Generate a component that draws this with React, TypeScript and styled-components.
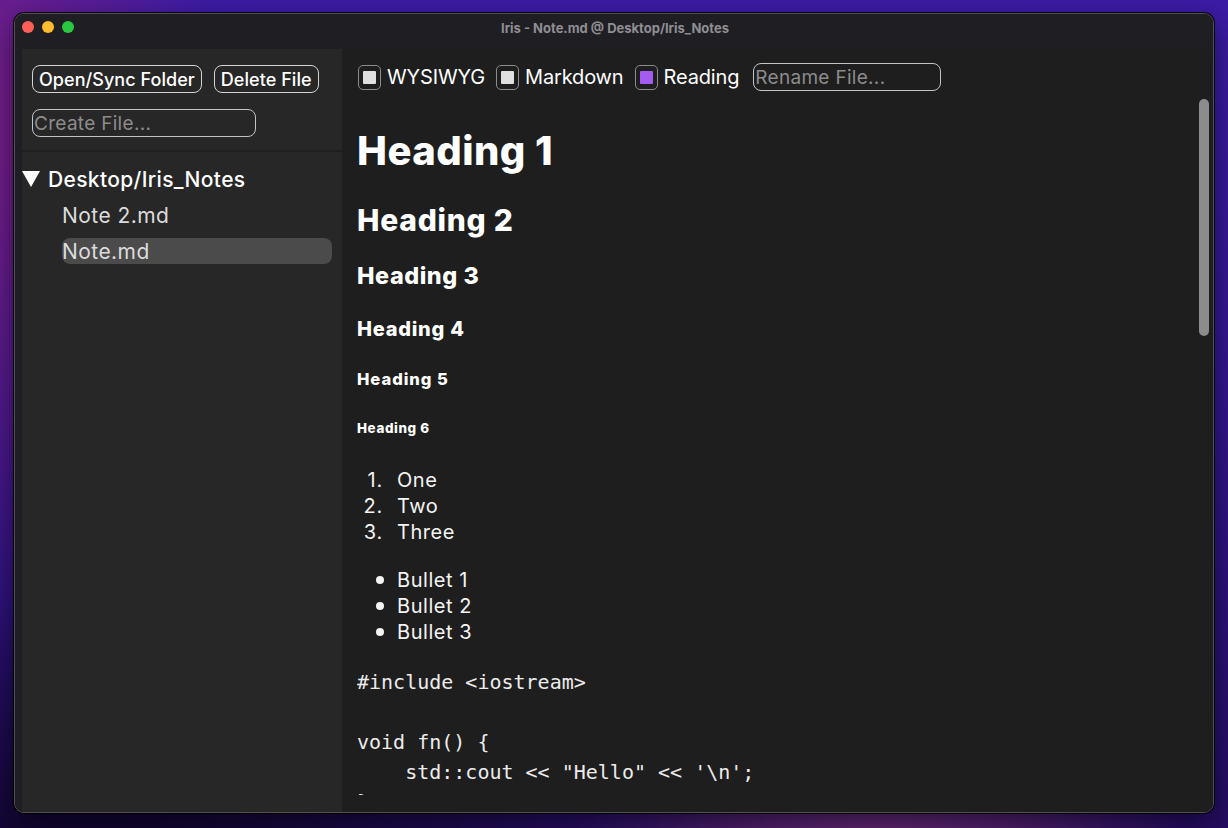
import React from "react";
import styled, { createGlobalStyle } from "styled-components";

const Global = createGlobalStyle`
  html, body { margin: 0; padding: 0; }
  body {
    width: 1228px;
    height: 828px;
    overflow: hidden;
    font-family: Inter, "Noto Sans", "Liberation Sans", sans-serif;
  }
  * { box-sizing: border-box; }
`;

const Desktop = styled.div`
  width: 1228px;
  height: 828px;
  padding: 13px 14px 15px 14px;
  background:
    radial-gradient(ellipse 320px 120px at 880px 860px, rgba(150, 60, 130, 0.75), rgba(150, 60, 130, 0) 100%),
    radial-gradient(ellipse 260px 500px at -40px 120px, rgba(130, 30, 130, 0.9), rgba(130, 30, 130, 0) 100%),
    radial-gradient(ellipse 500px 300px at 100px 900px, rgba(10, 3, 30, 0.95), rgba(10, 3, 30, 0) 100%),
    linear-gradient(180deg, #3b1ca6 0%, #32168f 50%, #240d62 100%);
`;

const Window = styled.div`
  width: 1200px;
  height: 800px;
  border-radius: 10px;
  border: 1px solid #505050;
  box-shadow: 0 0 0 1px rgba(0, 0, 0, 0.85), 0 10px 30px rgba(0, 0, 0, 0.5);
  background: #1e1e1f;
  display: flex;
  flex-direction: column;
  overflow: hidden;
`;

const TitleBar = styled.div`
  height: 27px;
  flex: none;
  position: relative;
  display: flex;
  align-items: center;
  justify-content: center;
  background: #1f1e22;
`;

const Lights = styled.div`
  position: absolute;
  left: 7px;
  top: 7px;
  display: flex;
  gap: 8px;
`;

const Light = styled.span<{ $c: string }>`
  width: 12px;
  height: 12px;
  border-radius: 50%;
  background: ${(p) => p.$c};
`;

const Title = styled.div`
  font-family: Inter, "Liberation Sans", sans-serif;
  font-size: 13px;
  font-weight: 700;
  color: #8f8e93;
  margin-left: 2px;
`;

const Body = styled.div`
  flex: 1;
  min-height: 0;
  display: flex;
  padding: 8px 0 0 7px;
  background: #1f1e22;
`;

const Sidebar = styled.aside`
  width: 320px;
  flex: none;
  background: #272727;
  display: flex;
  flex-direction: column;
`;

const SideTop = styled.div`
  padding: 16px 10px 13px 10px;
  display: flex;
  flex-direction: column;
  gap: 16px;
  border-bottom: 2px solid #1f1f1f;
`;

const ButtonRow = styled.div`
  display: flex;
  gap: 12px;
`;

const Button = styled.button`
  height: 28px;
  padding: 0 6px;
  border: 1px solid #d4d4d4;
  border-radius: 8px;
  background: transparent;
  color: #ffffff;
  font-family: Inter, "Liberation Sans", sans-serif;
  font-size: 18px;
  font-weight: 500;
  letter-spacing: 0.05px;
  cursor: pointer;
`;

const TextInput = styled.input<{ $w: number }>`
  width: ${(p) => p.$w}px;
  height: 28px;
  padding: 0 1px;
  border: 1px solid #c4c4c4;
  border-radius: 8px;
  background: transparent;
  color: #ffffff;
  font-family: Inter, "Liberation Sans", sans-serif;
  font-size: 19px;
  letter-spacing: 0.3px;
  outline: none;
  &::placeholder {
    color: #8c8c8c;
  }
`;

const Tree = styled.div`
  padding-top: 14px;
  display: flex;
  flex-direction: column;
  gap: 10px;
`;

const TreeHeader = styled.div`
  height: 26px;
  display: flex;
  align-items: center;
  gap: 8px;
  color: #ffffff;
  font-size: 21px;
  font-weight: 500;
  letter-spacing: 0.35px;
`;

const TreeItem = styled.div<{ $selected?: boolean }>`
  height: 26px;
  margin: 0 10px 0 40px;
  display: flex;
  align-items: center;
  border-radius: 8px;
  background: ${(p) => (p.$selected ? "#4b4b4b" : "transparent")};
  color: #dcdcdc;
  font-size: 21px;
  font-weight: 400;
  letter-spacing: 0.45px;
`;

const Main = styled.main`
  flex: 1;
  min-width: 0;
  position: relative;
  display: flex;
  flex-direction: column;
  padding: 14px 15px 17px 15px;
  background: #1e1e1e;
`;

const Toolbar = styled.div`
  height: 28px;
  flex: none;
  display: flex;
  align-items: center;
  padding-left: 1px;
`;

const Choice = styled.label`
  display: flex;
  align-items: center;
  gap: 6px;
  margin-right: 11px;
  color: #ffffff;
  font-size: 20px;
  font-weight: 400;
  letter-spacing: -0.15px;
`;

const Box = styled.span`
  width: 23px;
  height: 25px;
  border: 1px solid #8c8c8c;
  border-radius: 5px;
  display: flex;
  align-items: center;
  justify-content: center;
`;

const Mark = styled.span<{ $on?: boolean }>`
  width: 13px;
  height: 13px;
  border-radius: 1px;
  background: ${(p) => (p.$on ? "#a45cf0" : "#e0e0e0")};
`;

const RenameSlot = styled.div`
  margin-left: 3px;
  display: flex;
`;

const Scroll = styled.div`
  flex: 1;
  min-height: 0;
  overflow: hidden;
  margin-top: 9px;
  color: #ffffff;
  font-size: 20px;
`;

const H1 = styled.h1`
  font-size: 40px;
  font-weight: 800;
  margin: 26.8px 0;
  line-height: 48px;
  letter-spacing: 0.45px;
`;
const H2 = styled.h2`
  font-size: 30px;
  font-weight: 800;
  margin: 24.9px 0;
  line-height: 36px;
  letter-spacing: 0.75px;
`;
const H3 = styled.h3`
  font-size: 23.4px;
  font-weight: 800;
  margin: 23.4px 0;
  line-height: 28px;
  letter-spacing: 0.55px;
`;
const H4 = styled.h4`
  font-size: 20px;
  font-weight: 800;
  margin: 26.6px 0;
  line-height: 24px;
  letter-spacing: 0.75px;
`;
const H5 = styled.h5`
  font-size: 16.6px;
  font-weight: 800;
  margin: 27.7px 0;
  line-height: 20px;
  letter-spacing: 0.95px;
`;
const H6 = styled.h6`
  font-size: 13.4px;
  font-weight: 800;
  margin: 31.2px 0;
  line-height: 16px;
  letter-spacing: 0.6px;
`;

const List = styled.div<{ $mb: number }>`
  margin: 20px 0 ${(p) => p.$mb}px 0;
  display: flex;
  flex-direction: column;
  line-height: 26px;
  color: #f4f4f4;
  letter-spacing: 0.55px;
`;

const Item = styled.div`
  display: flex;
  align-items: center;
`;

const Num = styled.span`
  width: 40px;
  flex: none;
  padding-right: 14px;
  text-align: right;
  letter-spacing: 0.8px;
`;

const Disc = styled.span`
  width: 40px;
  flex: none;
  display: flex;
  justify-content: flex-end;
  padding-right: 13px;
  &::before {
    content: "";
    width: 8px;
    height: 8px;
    border-radius: 50%;
    background: #f4f4f4;
  }
`;

const Code = styled.pre`
  margin: 22px 0;
  font-family: "DejaVu Sans Mono", "Liberation Mono", monospace;
  font-size: 20px;
  line-height: 30px;
  color: #ececec;
`;

const Thumb = styled.div`
  position: absolute;
  right: 4px;
  top: 50px;
  width: 10px;
  height: 237px;
  border-radius: 5px;
  background: #8c8c8c;
`;

const code = `#include <iostream>

void fn() {
    std::cout << "Hello" << '\\n';
}

int main() {
    fn();
    return 0;
}`;

const ordered = ["One", "Two", "Three"];
const bullets = ["Bullet 1", "Bullet 2", "Bullet 3"];

export default function App() {
  return (
    <>
      <Global />
      <Desktop>
        <Window>
          <TitleBar>
            <Lights>
              <Light $c="#fe5f57" />
              <Light $c="#febc2e" />
              <Light $c="#28c840" />
            </Lights>
            <Title>Iris - Note.md @ Desktop/Iris_Notes</Title>
          </TitleBar>
          <Body>
            <Sidebar>
              <SideTop>
                <ButtonRow>
                  <Button>Open/Sync Folder</Button>
                  <Button>Delete File</Button>
                </ButtonRow>
                <TextInput $w={224} placeholder="Create File..." />
              </SideTop>
              <Tree>
                <TreeHeader>
                  <svg width="18" height="16" viewBox="0 0 18 16">
                    <polygon points="0,0 18,0 9,16" fill="#ffffff" />
                  </svg>
                  Desktop/Iris_Notes
                </TreeHeader>
                <TreeItem>Note 2.md</TreeItem>
                <TreeItem $selected>Note.md</TreeItem>
              </Tree>
            </Sidebar>
            <Main>
              <Toolbar>
                <Choice>
                  <Box>
                    <Mark />
                  </Box>
                  WYSIWYG
                </Choice>
                <Choice>
                  <Box>
                    <Mark />
                  </Box>
                  Markdown
                </Choice>
                <Choice>
                  <Box>
                    <Mark $on />
                  </Box>
                  Reading
                </Choice>
                <RenameSlot>
                  <TextInput $w={188} placeholder="Rename File..." />
                </RenameSlot>
              </Toolbar>
              <Scroll>
                <H1>Heading 1</H1>
                <H2>Heading 2</H2>
                <H3>Heading 3</H3>
                <H4>Heading 4</H4>
                <H5>Heading 5</H5>
                <H6>Heading 6</H6>
                <List $mb={22}>
                  {ordered.map((t, i) => (
                    <Item key={t}>
                      <Num>{i + 1}.</Num>
                      {t}
                    </Item>
                  ))}
                </List>
                <List $mb={20}>
                  {bullets.map((t) => (
                    <Item key={t}>
                      <Disc />
                      {t}
                    </Item>
                  ))}
                </List>
                <Code>{code}</Code>
              </Scroll>
              <Thumb />
            </Main>
          </Body>
        </Window>
      </Desktop>
    </>
  );
}
